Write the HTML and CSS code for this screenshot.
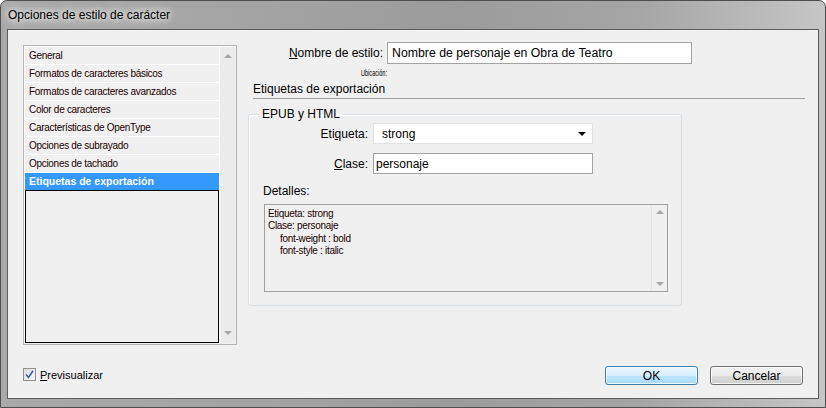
FILE: index.html
```html
<!DOCTYPE html>
<html lang="es">
<head>
  <meta charset="UTF-8">
  <title>Opciones de estilo de carácter</title>
  <link rel="stylesheet" href="styles.css">
</head>
<body>
  <div class="window">
    <div class="titlebar"><span class="title">Opciones de estilo de carácter</span></div>
    <div class="client">
      <div class="main">
        <div class="sidebar">
          <ul class="cat-list">
            <li>General</li>
            <li>Formatos de caracteres básicos</li>
            <li>Formatos de caracteres avanzados</li>
            <li>Color de caracteres</li>
            <li>Características de OpenType</li>
            <li>Opciones de subrayado</li>
            <li>Opciones de tachado</li>
            <li class="selected">Etiquetas de exportación</li>
            <li class="empty"></li>
          </ul>
          <div class="vscroll">
            <span class="arrow up"></span>
            <span class="arrow down"></span>
          </div>
        </div>

        <div class="panel">
          <div class="field-row name-row">
            <label class="field-label"><u>N</u>ombre de estilo:</label>
            <input class="text-input name-input" type="text" value="Nombre de personaje en Obra de Teatro">
          </div>
          <div class="location"><span>Ubicación:</span></div>
          <div class="section-title">Etiquetas de exportación</div>

          <fieldset class="group">
            <legend>EPUB y HTML</legend>
            <div class="field-row">
              <label class="field-label">Eti<u>q</u>ueta:</label>
              <div class="select">strong<span class="caret"></span></div>
            </div>
            <div class="field-row class-row">
              <label class="field-label"><u>C</u>lase:</label>
              <input class="text-input" type="text" value="personaje">
            </div>
            <div class="details-label">Detalles:</div>
            <div class="details">
              <div class="details-text">
                <div>Etiqueta: strong</div>
                <div>Clase: personaje</div>
                <div class="indent">font-weight : bold</div>
                <div class="indent">font-style : italic</div>
              </div>
              <div class="vscroll small">
                <span class="arrow up"></span>
                <span class="arrow down"></span>
              </div>
            </div>
          </fieldset>
        </div>
      </div>

      <div class="footer">
        <label class="check">
          <span class="box">
            <svg width="9" height="9" viewBox="0 0 9 9"><path d="M1 4.5 L3.5 7.5 L8 0.8" fill="none" stroke="#3b5aa6" stroke-width="1.6"/></svg>
          </span>
          <span><u>P</u>revisualizar</span>
        </label>
        <div class="buttons">
          <button class="btn default">OK</button>
          <button class="btn">Cancelar</button>
        </div>
      </div>
    </div>
  </div>
</body>
</html>
```

FILE: styles.css
```css
* { box-sizing: border-box; margin: 0; padding: 0; }
html, body {
  width: 826px; height: 408px;
  background: #ffffff;
  font-family: 'Liberation Sans', Arial, sans-serif;
  overflow: hidden;
}
.window {
  width: 826px; height: 408px;
  display: flex; flex-direction: column;
  padding: 0 6px 8px 6px;
  border: 1px solid #4e4e4e;
  border-radius: 7px 7px 0 0;
  background: linear-gradient(90deg, #a9a9a9 0%, #a4a4a4 30%, #9b9b9b 55%, #a6a6a6 78%, #c6c6c6 100%);
}
.titlebar {
  height: 28px;
  flex-shrink: 0;
  display: flex; align-items: center;
  padding-left: 1px;
}
.title {
  font-size: 12px;
  color: #000;
  text-shadow: 0 0 6px #fff, 0 0 10px rgba(255,255,255,0.9), 0 0 14px rgba(255,255,255,0.7);
}
.client {
  flex: 1;
  display: flex; flex-direction: column;
  background: #f0f0f0;
  border: 1px solid #5c5c5c;
}

/* zona principal */
.main {
  flex: 1;
  display: flex;
  gap: 11px;
  padding: 12px 12px 0 15px;
}
.sidebar {
  width: 214px; height: 300px;
  margin-top: 3px;
  display: flex;
  border: 1px solid #b4b4b4;
  box-shadow: inset 1px 1px 0 #fff;
  padding: 1px 0 1px 1px;
}
.cat-list {
  list-style: none;
  width: 194px;
  display: flex; flex-direction: column;
  font-size: 10px;
  letter-spacing: -0.3px;
  color: #1a0000;
}
.cat-list li {
  height: 18px;
  line-height: 17px;
  padding-left: 4px;
  border-bottom: 1px solid #fff;
  white-space: nowrap;
}
.cat-list li.selected {
  background: #3399ff;
  color: #fff;
  font-weight: bold;
  font-size: 10.5px;
  letter-spacing: 0;
  border-bottom: none;
  height: 17px;
}
.cat-list li.empty {
  flex: 1;
  border: 1px solid #000;
}
.vscroll {
  flex: 1;
  display: flex; flex-direction: column; justify-content: space-between; align-items: center;
  padding: 7px 0 8px;
  background: #ececec;
  border-left: 1px solid #fff;
}
.arrow {
  width: 0; height: 0;
  border-left: 4px solid transparent;
  border-right: 4px solid transparent;
}
.arrow.up { border-bottom: 4px solid #a6a6a6; }
.arrow.down { border-top: 4px solid #a6a6a6; }

/* panel derecho */
.panel {
  width: 557px;
  display: flex; flex-direction: column;
  font-size: 12px;
  color: #000;
}
.field-row {
  display: flex; align-items: center;
}
.field-label {
  width: 135px;
  text-align: right;
  margin-right: 4px;
  white-space: nowrap;
}
.text-input {
  font-family: inherit;
  font-size: 12px;
  color: #000;
  background: #fff;
  border: 1px solid #a3a3a3;
  height: 21px;
  width: 220px;
  padding: 0 2px;
  outline: none;
}
.name-input {
  width: 305px;
  height: 22px;
  padding: 0 4px;
  font-size: 12.3px;
}
.location {
  width: 139px;
  text-align: right;
  font-size: 9px;
  line-height: 11px;
  margin-top: 4px;
}
.location span {
  display: inline-block;
  transform: scaleX(0.62);
  transform-origin: right center;
}
.section-title {
  margin: 3px 0 0 5px;
  height: 17px;
  line-height: 15px;
  border-bottom: 1px solid #a0a0a0;
}
.group {
  width: 434px;
  margin-top: 8px;
  padding: 1px 13px 13px 14px;
  border: 1px solid #d5dfe5;
  border-radius: 3px;
  box-shadow: inset 1px 1px 0 #fff;
}
.group legend {
  padding: 0 3px;
  margin-left: -4px;
  line-height: 15px;
}
.group .field-label {
  width: 105px;
  margin-right: 5px;
}
.select {
  width: 220px; height: 21px;
  background: #fff;
  border: 1px solid #e2e2e2;
  padding-left: 8px;
  display: flex; align-items: center; justify-content: space-between;
  padding-right: 6px;
}
.caret {
  width: 0; height: 0;
  border-left: 4px solid transparent;
  border-right: 4px solid transparent;
  border-top: 4px solid #000;
}
.class-row { margin-top: 9px; }
.details-label {
  margin-top: 10px;
  line-height: 15px;
}
.details {
  margin: 5px 0 0 1px;
  width: 404px; height: 88px;
  border: 1px solid #a0a0a0;
  display: flex;
}
.details-text {
  flex: 1;
  padding: 3px 0 0 3px;
  font-size: 10px;
  letter-spacing: -0.3px;
  line-height: 12.3px;
  color: #1a0000;
}
.details-text .indent { padding-left: 12px; }
.vscroll.small {
  flex: none;
  width: 16px;
  padding: 5px 0 5px;
  background: #f0f0f0;
  border-left: 1px solid #e4e4e4;
}

/* pie */
.footer {
  height: 32px;
  flex-shrink: 0;
  display: flex; justify-content: space-between; align-items: flex-start;
  padding: 0 15px 0 15px;
}
.check {
  display: flex; align-items: center;
  gap: 4px;
  font-size: 11px;
  margin-top: 2px;
}
.box {
  width: 13px; height: 13px;
  border: 1px solid #8f8f8f;
  background: linear-gradient(135deg, #dcdcdc, #fbfbfb);
  display: flex; align-items: center; justify-content: center;
}
.buttons {
  display: flex; gap: 12px;
}
.btn {
  width: 93px; height: 19px;
  font-family: inherit;
  font-size: 12px;
  color: #000;
  border: 1px solid #707070;
  border-radius: 3px;
  background: linear-gradient(#f2f2f2 0%, #ebebeb 50%, #dddddd 50%, #cfcfcf 100%);
  box-shadow: inset 0 0 0 1px rgba(255,255,255,0.75);
}
.btn.default {
  border-color: #3c7fb1;
  background: linear-gradient(#eaf6fd 0%, #d9f0fc 50%, #bee6fd 50%, #a7d9f5 100%);
}
```
